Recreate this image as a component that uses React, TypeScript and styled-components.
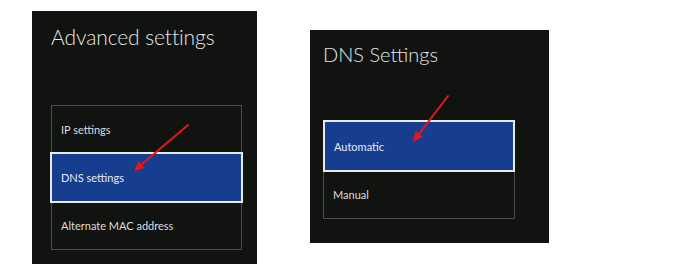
import React from "react";
import styled, { createGlobalStyle } from "styled-components";

const Global = createGlobalStyle`
  html, body { margin: 0; padding: 0; background: #ffffff; }
  body { font-family: "Lato", "Open Sans", sans-serif; }
`;

const Page = styled.div`
  display: flex;
  align-items: flex-start;
  gap: 53px;
  padding: 11px 0 0 32px;
  width: 681px;
  height: 272px;
  box-sizing: border-box;
`;

const Panel = styled.div<{ $w: number; $h: number; $offset: number; $pad: number }>`
  position: relative;
  width: ${(p) => p.$w}px;
  height: ${(p) => p.$h}px;
  margin-top: ${(p) => p.$offset}px;
  padding-left: ${(p) => p.$pad}px;
  box-sizing: border-box;
  background: #111311;
  display: flex;
  flex-direction: column;
`;

const Title = styled.h1<{ $size: number; $top: number; $ls?: number }>`
  margin: ${(p) => p.$top}px 0 0 0;
  font-family: "Lato", sans-serif;
  font-weight: 300;
  font-size: ${(p) => p.$size}px;
  letter-spacing: ${(p) => p.$ls ?? 0}px;
  line-height: 1;
  color: #e4e6e4;
`;

const List = styled.div<{ $w: number; $top: number }>`
  margin-top: ${(p) => p.$top}px;
  width: ${(p) => p.$w}px;
  border: 1px solid #4b4d4b;
  box-sizing: border-box;
  display: flex;
  flex-direction: column;
`;

const Row = styled.div<{ $h: number; $selected?: boolean; $ext?: number }>`
  height: ${(p) => p.$h}px;
  display: flex;
  align-items: center;
  box-sizing: border-box;
  padding-left: ${(p) => (p.$selected ? 9 : 9 + (p.$ext ?? 0))}px;
  font-family: "Lato", sans-serif;
  font-size: 11px;
  color: #dcdedc;
  ${(p) =>
    p.$selected
      ? `
    background: #163d8e;
    border: 2px solid #e8ebe8;
    margin: -1px -${(p.$ext ?? 0) + 1}px;
    height: ${p.$h + 2}px;
    color: #e6e9f0;
  `
      : ""}
`;

const ArrowSvg = styled.svg`
  position: absolute;
  left: 0;
  top: 0;
  width: 100%;
  height: 100%;
  pointer-events: none;
  overflow: visible;
`;

function Arrow({ x1, y1, x2, y2 }: { x1: number; y1: number; x2: number; y2: number }) {
  const dx = x2 - x1;
  const dy = y2 - y1;
  const len = Math.hypot(dx, dy);
  const ux = dx / len;
  const uy = dy / len;
  const hl = 10;
  const hw = 4.5;
  const bx = x2 - ux * hl;
  const by = y2 - uy * hl;
  const pts = `${x2},${y2} ${bx - uy * hw},${by + ux * hw} ${bx + uy * hw},${by - ux * hw}`;
  return (
    <ArrowSvg>
      <line x1={x1} y1={y1} x2={bx + ux * 2} y2={by + uy * 2} stroke="#ea1419" strokeWidth={2} strokeLinecap="round" />
      <polygon points={pts} fill="#ea1419" />
    </ArrowSvg>
  );
}

export default function App() {
  return (
    <>
      <Global />
      <Page>
        <Panel $w={225} $h={253} $offset={0} $pad={19}>
          <Title $size={21} $top={15} $ls={-0.1}>Advanced settings</Title>
          <List $w={191} $top={58}>
            <Row $h={47} $ext={0}>IP settings</Row>
            <Row $h={49} $selected $ext={1}>DNS settings</Row>
            <Row $h={47} $ext={0}>Alternate MAC address</Row>
          </List>
          <Arrow x1={156} y1={114} x2={102} y2={160} />
        </Panel>
        <Panel $w={239} $h={213} $offset={19} $pad={13}>
          <Title $size={20} $top={14}>DNS Settings</Title>
          <List $w={192} $top={56}>
            <Row $h={50} $selected $ext={0}>Automatic</Row>
            <Row $h={47} $ext={0}>Manual</Row>
          </List>
          <Arrow x1={138} y1={66} x2={103} y2={112} />
        </Panel>
      </Page>
    </>
  );
}
